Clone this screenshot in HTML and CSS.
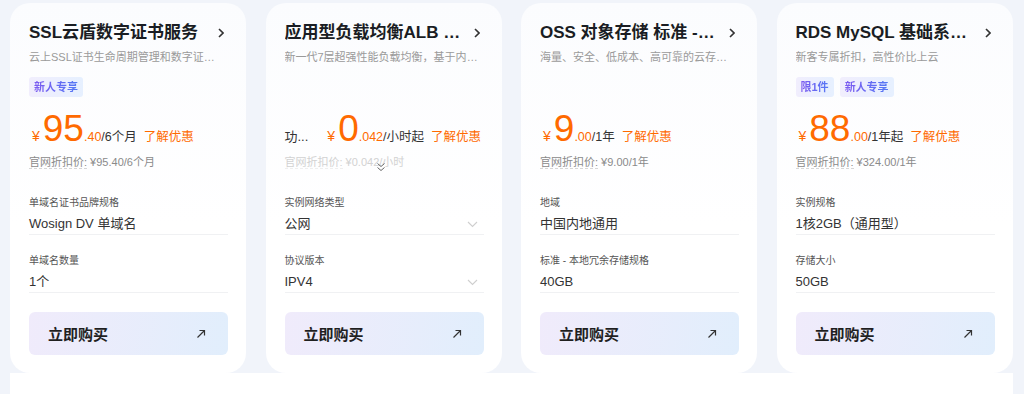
FILE: index.html
```html
<!DOCTYPE html>
<html lang="zh-CN">
<head>
<meta charset="utf-8">
<title>精选云产品</title>
<link rel="stylesheet" href="styles.css">
</head>
<body>

<div class="main-view">

	<div class="cards">

		<!-- SSL -->
		<div class="card">
			<div class="card-head">
				<div class="card-title">SSL云盾数字证书服务</div>
				<svg class="more" width="6" height="10" viewBox="0 0 6 10"><path d="M1 1 L5 5 L1 9" /></svg>
			</div>
			<div class="card-desc">云上SSL证书生命周期管理和数字证书服务平台</div>
			<div class="tags">
				<span class="tag"><span>新人专享</span></span>
			</div>
			<div class="price">
				<span class="yen">¥</span><span class="num">95</span><span class="dec">.40</span><span class="unit">/6个月</span><span class="deal">了解优惠</span>
			</div>
			<div class="origin"><span class="origin-label">官网折扣价:</span> ¥95.40/6个月</div>
			<div class="field">
				<div class="field-label">单域名证书品牌规格</div>
				<div class="field-value">Wosign DV 单域名</div>
			</div>
			<div class="field">
				<div class="field-label">单域名数量</div>
				<div class="field-value">1个</div>
			</div>
			<div class="buy-btn">
				<span>立即购买</span>
				<svg width="10" height="10" viewBox="0 0 10 10"><path d="M1.5 8.5 L8.5 1.5 M3.5 1.5 H8.5 V6.5" /></svg>
			</div>
		</div>

		<!-- ALB -->
		<div class="card">
			<div class="card-head">
				<div class="card-title">应用型负载均衡ALB 按量付费</div>
				<svg class="more" width="6" height="10" viewBox="0 0 6 10"><path d="M1 1 L5 5 L1 9" /></svg>
			</div>
			<div class="card-desc">新一代7层超强性能负载均衡，基于内容的高级路由</div>
			<div class="tags"></div>
			<div class="price">
				<span class="pre">功...</span><span class="yen">¥</span><span class="num">0</span><span class="dec">.042</span><span class="unit">/小时起</span><span class="deal">了解优惠</span>
			</div>
			<div class="origin faded"><span class="origin-label">官网折扣价:</span> ¥0.042/小时</div>
			<svg class="expand" width="10" height="10" viewBox="0 0 10 10"><path d="M1.5 1.5 L5 4.5 L8.5 1.5 M1.5 5.5 L5 8.5 L8.5 5.5" /></svg>
			<div class="field">
				<div class="field-label">实例网络类型</div>
				<div class="field-value select">公网<svg width="11" height="7" viewBox="0 0 11 7"><path d="M1 1 L5.5 5.5 L10 1" /></svg></div>
			</div>
			<div class="field">
				<div class="field-label">协议版本</div>
				<div class="field-value select">IPV4<svg width="11" height="7" viewBox="0 0 11 7"><path d="M1 1 L5.5 5.5 L10 1" /></svg></div>
			</div>
			<div class="buy-btn">
				<span>立即购买</span>
				<svg width="10" height="10" viewBox="0 0 10 10"><path d="M1.5 8.5 L8.5 1.5 M3.5 1.5 H8.5 V6.5" /></svg>
			</div>
		</div>

		<!-- OSS -->
		<div class="card">
			<div class="card-head">
				<div class="card-title">OSS 对象存储 标准 - 本地冗余存储包</div>
				<svg class="more" width="6" height="10" viewBox="0 0 6 10"><path d="M1 1 L5 5 L1 9" /></svg>
			</div>
			<div class="card-desc">海量、安全、低成本、高可靠的云存储服务</div>
			<div class="tags"></div>
			<div class="price">
				<span class="yen">¥</span><span class="num">9</span><span class="dec">.00</span><span class="unit">/1年</span><span class="deal">了解优惠</span>
			</div>
			<div class="origin"><span class="origin-label">官网折扣价:</span> ¥9.00/1年</div>
			<div class="field">
				<div class="field-label">地域</div>
				<div class="field-value">中国内地通用</div>
			</div>
			<div class="field">
				<div class="field-label">标准 - 本地冗余存储规格</div>
				<div class="field-value">40GB</div>
			</div>
			<div class="buy-btn">
				<span>立即购买</span>
				<svg width="10" height="10" viewBox="0 0 10 10"><path d="M1.5 8.5 L8.5 1.5 M3.5 1.5 H8.5 V6.5" /></svg>
			</div>
		</div>

		<!-- RDS -->
		<div class="card">
			<div class="card-head">
				<div class="card-title">RDS MySQL 基础系列 经济版</div>
				<svg class="more" width="6" height="10" viewBox="0 0 6 10"><path d="M1 1 L5 5 L1 9" /></svg>
			</div>
			<div class="card-desc">新客专属折扣，高性价比上云</div>
			<div class="tags">
				<span class="tag"><span>限1件</span></span>
				<span class="tag"><span>新人专享</span></span>
			</div>
			<div class="price">
				<span class="yen">¥</span><span class="num">88</span><span class="dec">.00</span><span class="unit">/1年起</span><span class="deal">了解优惠</span>
			</div>
			<div class="origin"><span class="origin-label">官网折扣价:</span> ¥324.00/1年</div>
			<div class="field">
				<div class="field-label">实例规格</div>
				<div class="field-value">1核2GB（通用型）</div>
			</div>
			<div class="field">
				<div class="field-label">存储大小</div>
				<div class="field-value">50GB</div>
			</div>
			<div class="buy-btn">
				<span>立即购买</span>
				<svg width="10" height="10" viewBox="0 0 10 10"><path d="M1.5 8.5 L8.5 1.5 M3.5 1.5 H8.5 V6.5" /></svg>
			</div>
		</div>

	</div>

	<div class="panel"></div>

</div>

</body>
</html>
```

FILE: styles.css
```css
body {
	margin: 0;
	background: #f1f4fa;
	color: #1f2329;
	font-family: "Liberation Sans", "Noto Sans CJK SC", sans-serif;
	-webkit-font-smoothing: antialiased;
}
.main-view {
	width: 1003px;
	padding-left: 10px;
}
.cards {
	display: flex;
	gap: 19.5px;
	padding-top: 3px;
}
.panel {
	height: 21px;
	background: #fff;
}

/* card */
.card {
	position: relative;
	width: 236px;
	height: 370px;
	flex: none;
	box-sizing: border-box;
	padding: 18px 18px 18px 19px;
	display: flex;
	flex-direction: column;
	border-radius: 20px;
	background: linear-gradient(180deg, #fbfcfe 0%, #ffffff 60%);
}
.card-head {
	height: 24px;
	display: flex;
	align-items: center;
}
.card-title {
	flex: 1;
	min-width: 0;
	font-size: 17px;
	font-weight: 700;
	line-height: 24px;
	white-space: nowrap;
	overflow: hidden;
	text-overflow: ellipsis;
	color: #1a1d23;
}
.more {
	flex: none;
	margin: 0 4px 0 10px;
}
.more path {
	fill: none;
	stroke: #333;
	stroke-width: 1.6;
}
.card-desc {
	margin-top: 3px;
	padding-right: 5px;
	font-size: 11px;
	line-height: 18px;
	color: #9a9a9a;
	white-space: nowrap;
	overflow: hidden;
	text-overflow: ellipsis;
}

/* tags */
.tags {
	height: 20px;
	margin-top: 11px;
	display: flex;
	gap: 6px;
}
.tag {
	height: 20px;
	padding: 0 5px;
	border-radius: 3px;
	background: linear-gradient(90deg, #f1eefd, #e6f0ff);
	font-size: 11px;
	line-height: 20px;
	font-weight: 700;
}
.tag span {
	background: linear-gradient(90deg, #7d5bf0, #5378f5);
	-webkit-background-clip: text;
	background-clip: text;
	color: transparent;
}

/* price */
.price {
	height: 40px;
	margin-top: 12px;
	display: flex;
	align-items: baseline;
	line-height: 40px;
	white-space: nowrap;
}
.pre {
	font-size: 13px;
	color: #333;
	margin-right: 16px;
}
.yen {
	font-size: 14px;
	color: #ff6a00;
	margin: 0 3px 0 3px;
}
.num {
	font-family: "Liberation Sans Narrow", "Liberation Sans", sans-serif;
	font-size: 37px;
	color: #ff6a00;
}
.dec {
	font-size: 12.5px;
	color: #ff6a00;
}
.unit {
	font-size: 12.5px;
	color: #333;
}
.deal {
	margin-left: 7px;
	font-size: 12.5px;
	color: #ff6a00;
}
.origin {
	height: 16px;
	margin-top: 5px;
	font-size: 11px;
	line-height: 16px;
	color: #8a8a8a;
}
.origin-label {
	border-bottom: 1px dashed #d6d6d6;
}
.origin.faded {
	color: #d2d2d2;
}
.origin.faded .origin-label {
	border-bottom-color: #eee;
}
.expand {
	position: absolute;
	left: 110px;
	top: 159px;
}
.expand path {
	fill: none;
	stroke: #666;
	stroke-width: 1;
}

/* fields */
.field {
	margin-top: 19px;
}
.origin + .field,
.expand + .field {
	margin-top: 26px;
}
.field-label {
	font-size: 10px;
	line-height: 14px;
	color: #555;
}
.field-value {
	margin-top: 4px;
	height: 20px;
	font-size: 13px;
	line-height: 20px;
	color: #333;
	border-bottom: 1px solid #f0f1f3;
}
.field-value.select {
	display: flex;
	align-items: center;
	justify-content: space-between;
}
.field-value.select svg {
	margin-right: 6px;
}
.field-value.select path {
	fill: none;
	stroke: #cfcfcf;
	stroke-width: 1.1;
}

/* button */
.buy-btn {
	height: 43px;
	margin-top: 19px;
	padding: 0 22px 0 19px;
	display: flex;
	align-items: center;
	justify-content: space-between;
	border-radius: 6px;
	background: linear-gradient(100deg, #f0ebfb 0%, #e1eefc 100%);
	font-size: 15px;
	font-weight: 700;
	color: #1f1f1f;
	cursor: pointer;
}
.buy-btn path {
	fill: none;
	stroke: #333;
	stroke-width: 1.2;
}
```
